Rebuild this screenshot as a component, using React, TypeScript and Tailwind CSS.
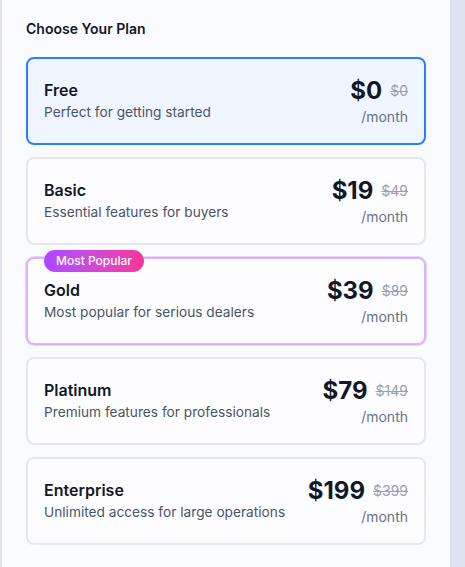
import React from 'react'

type Plan = {
  name: string
  desc: string
  price: string
  old: string
  popular?: boolean
  selected?: boolean
}

const plans: Plan[] = [
  { name: 'Free', desc: 'Perfect for getting started', price: '$0', old: '$0', selected: true },
  { name: 'Basic', desc: 'Essential features for buyers', price: '$19', old: '$49' },
  { name: 'Gold', desc: 'Most popular for serious dealers', price: '$39', old: '$89', popular: true },
  { name: 'Platinum', desc: 'Premium features for professionals', price: '$79', old: '$149' },
  { name: 'Enterprise', desc: 'Unlimited access for large operations', price: '$199', old: '$399' }
]

const PlanCard = ({ plan }: { plan: Plan }) => {
  let cls = 'border-gray-200 bg-white/50'
  if (plan.selected) cls = 'border-blue-500 bg-blue-50'
  if (plan.popular) cls = 'border-purple-300 bg-white/50 ring-1 ring-purple-200'

  return (
    <div className={`relative flex h-[88px] items-center justify-between rounded-lg border-2 px-4 ${cls}`}>
      {plan.popular && (
        <span className="absolute -top-[9px] left-4 rounded-full bg-gradient-to-r from-purple-500 to-pink-500 px-3 py-[3px] text-xs font-medium text-white">
          Most Popular
        </span>
      )}
      <div className="flex flex-col">
        <p className="text-base font-semibold leading-5 text-gray-900">{plan.name}</p>
        <p className="mt-0.5 text-[13.7px] leading-5 text-gray-600">{plan.desc}</p>
      </div>
      <div className="flex flex-col items-end">
        <div className="flex items-center gap-2">
          <span className="text-2xl font-bold leading-8 text-gray-900">{plan.price}</span>
          <span className="text-sm text-gray-400 line-through">{plan.old}</span>
        </div>
        <p className="text-sm leading-5 text-gray-500">/month</p>
      </div>
    </div>
  )
}

const App = () => {
  return (
    <div className="flex min-h-screen bg-[#dde3ef] font-['Inter',sans-serif]">
      <div className="ml-[2px] w-[448px] bg-[#fafbfe] px-6 pt-[19px] pb-6">
        <h2 className="mb-[18px] text-sm font-semibold leading-5 text-gray-900">Choose Your Plan</h2>
        <div className="flex flex-col gap-3">
          {plans.map((p) => (
            <PlanCard key={p.name} plan={p} />
          ))}
        </div>
      </div>
    </div>
  )
}

export default App
